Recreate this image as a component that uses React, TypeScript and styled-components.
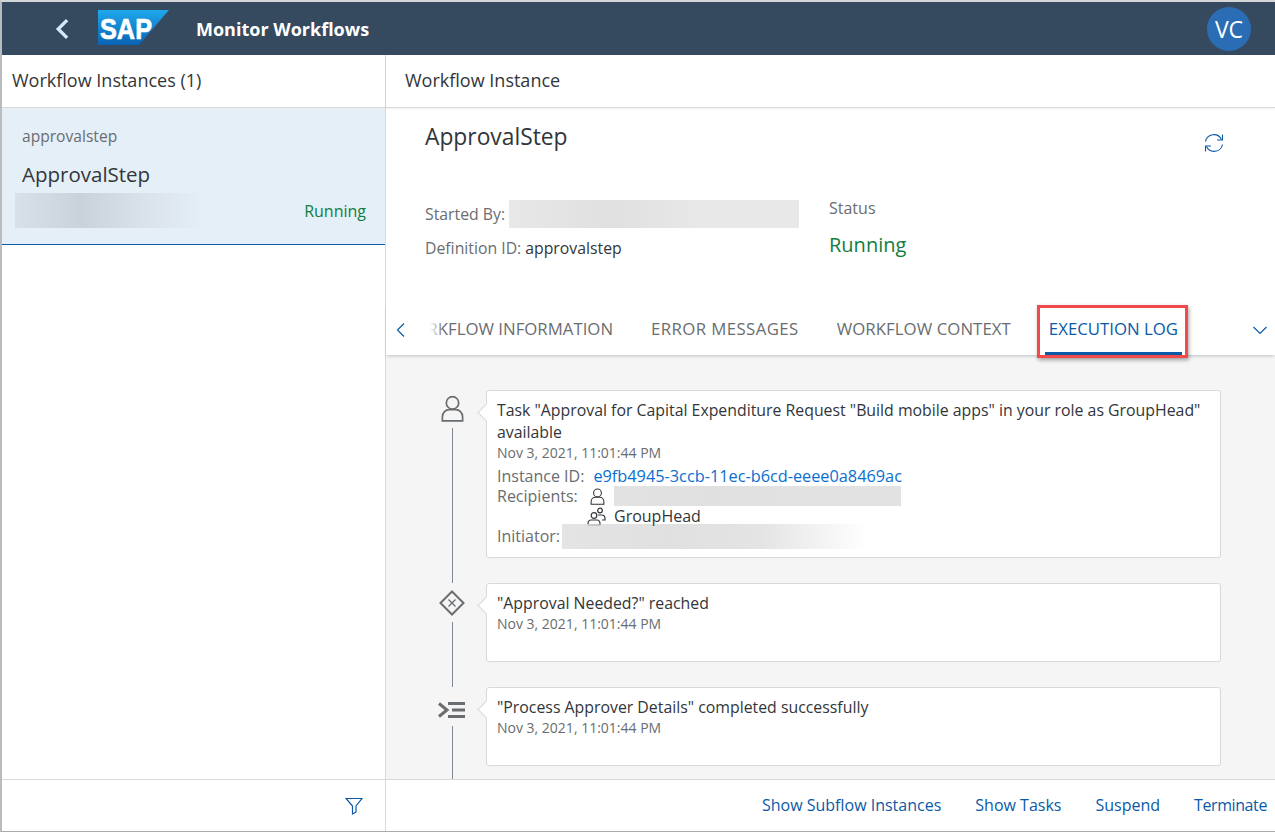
import React from "react";
import styled, { createGlobalStyle } from "styled-components";

const GlobalStyle = createGlobalStyle`
  html, body {
    margin: 0;
    padding: 0;
    background: #ffffff;
  }
  body {
    font-family: "Open Sans", "Liberation Sans", sans-serif;
    color: #32363a;
  }
  * {
    box-sizing: border-box;
  }
`;

const Page = styled.div`
  width: 1275px;
  height: 832px;
  display: flex;
  flex-direction: column;
  overflow: hidden;
  border-top: 2px solid #d4d6d8;
  border-left: 2px solid #b9bcbf;
  border-bottom: 1px solid #a9abad;
`;

const ShellBar = styled.header`
  height: 53px;
  flex: none;
  background: #354a5f;
  display: flex;
  align-items: center;
  padding: 0 24px 0 50px;
`;

const BackButton = styled.span`
  width: 22px;
  display: flex;
  color: #d1e8ff;
`;

const Logo = styled.svg`
  width: 72px;
  height: 36px;
  margin-left: 24px;
  margin-top: -1px;
`;

const ShellTitle = styled.h1`
  margin: 0 0 0 26px;
  font-size: 18px;
  font-weight: 700;
  color: #ffffff;
  flex: 1;
`;

const Avatar = styled.div`
  width: 44px;
  height: 44px;
  border-radius: 50%;
  background: #2a6db5;
  color: #ffffff;
  font-size: 23px;
  display: flex;
  align-items: center;
  justify-content: center;
`;

const Columns = styled.div`
  flex: 1;
  min-height: 0;
  display: flex;
`;

const MasterPane = styled.aside`
  width: 384px;
  flex: none;
  display: flex;
  flex-direction: column;
  border-right: 1px solid #d9d9d9;
`;

const DetailPane = styled.main`
  flex: 1;
  min-width: 0;
  display: flex;
  flex-direction: column;
`;

const PaneHeader = styled.div`
  height: 53px;
  flex: none;
  display: flex;
  align-items: center;
  padding: 0 0 2px ${(p: { $inset: number }) => p.$inset}px;
  font-size: 18px;
  color: #32363a;
  border-bottom: 1px solid #d9d9d9;
  box-shadow: 0 1px 2px rgba(0, 0, 0, 0.06);
`;

const InstanceItem = styled.div`
  height: 137px;
  flex: none;
  background: #e5eff8;
  border-bottom: 1px solid #0a5aa8;
  padding: 18px 19px 0 20px;
`;

const ItemSubject = styled.div`
  font-size: 15.6px;
  color: #6a6d70;
  line-height: 20px;
`;

const ItemTitle = styled.div`
  font-size: 20.5px;
  color: #32363a;
  line-height: 28px;
  margin-top: 14px;
`;

const ItemFooter = styled.div`
  display: flex;
  align-items: flex-end;
  justify-content: space-between;
  margin: 5px 0 0 -7px;
`;

const Redacted = styled.div<{ $w: number; $h: number; $tone: string; $gap?: number; $fade?: boolean }>`
  width: ${(p) => p.$w}px;
  height: ${(p) => p.$h}px;
  margin-left: ${(p) => p.$gap ?? 0}px;
  flex: none;
  background: linear-gradient(
    90deg,
    ${(p) => p.$tone} 0%,
    rgba(0, 0, 0, 0.12) 35%,
    ${(p) => p.$tone} 65%,
    ${(p) => (p.$fade ? "transparent" : p.$tone)} 100%
  );
`;

const ItemStatus = styled.div`
  font-size: 16px;
  color: #107e3e;
  line-height: 22px;
  margin-bottom: 6px;
`;

const Spacer = styled.div`
  flex: 1;
`;

const FilterBar = styled.div`
  height: 52px;
  flex: none;
  display: flex;
  align-items: center;
  justify-content: flex-end;
  padding: 0 22px 0 0;
  border-top: 1px solid #d9d9d9;
  color: #0a5aa8;
`;

const Summary = styled.section`
  height: 197px;
  flex: none;
  padding: 14px 0 0 39px;
  display: flex;
  flex-direction: column;
`;

const SummaryTop = styled.div`
  display: flex;
  justify-content: space-between;
  padding-right: 51px;
`;

const SummaryTitle = styled.h2`
  margin: 0;
  font-size: 22.8px;
  font-weight: 400;
  line-height: 30px;
  color: #32363a;
`;

const RefreshButton = styled.span`
  display: flex;
  margin-top: 11px;
  color: #0a5aa8;
`;

const SummaryFacts = styled.div`
  display: flex;
  margin-top: 44px;
`;

const FactColumn = styled.div`
  width: 404px;
  flex: none;
`;

const FactRow = styled.div`
  display: flex;
  align-items: center;
  height: 34px;
  font-size: 15.8px;
  color: #6a6d70;
`;

const FactValue = styled.span`
  color: #32363a;
  margin-left: 4px;
`;

const StatusLabel = styled.div`
  font-size: 16px;
  color: #6a6d70;
  line-height: 22px;
`;

const StatusValue = styled.div`
  font-size: 20px;
  color: #107e3e;
  line-height: 28px;
  margin-top: 12px;
`;

const TabBar = styled.nav`
  height: 50px;
  flex: none;
  display: flex;
  align-items: center;
  position: relative;
  z-index: 1;
  background: #ffffff;
  box-shadow: 0 2px 3px -1px rgba(0, 0, 0, 0.22);
`;

const TabArrow = styled.span`
  width: 30px;
  flex: none;
  display: flex;
  justify-content: center;
  color: #0a5aa8;
`;

const TabViewport = styled.div`
  width: 771px;
  height: 100%;
  flex: none;
  margin-left: 10px;
  overflow: hidden;
  position: relative;
  display: flex;
  justify-content: flex-end;
  &::before {
    content: "";
    position: absolute;
    left: 0;
    top: 0;
    bottom: 0;
    width: 18px;
    z-index: 1;
    background: linear-gradient(90deg, #ffffff 20%, rgba(255, 255, 255, 0));
  }
`;

const Tab = styled.div<{ $active?: boolean; $tracking?: number }>`
  flex: none;
  height: 100%;
  display: flex;
  align-items: center;
  margin: 0 19px;
  padding: 0 0 4px;
  font-size: 16.8px;
  letter-spacing: ${(p) => p.$tracking ?? 0}px;
  white-space: nowrap;
  color: ${(p) => (p.$active ? "#0a5aa8" : "#6a6d70")};
  position: relative;
  &::after {
    content: "";
    display: ${(p) => (p.$active ? "block" : "none")};
    position: absolute;
    left: -4px;
    right: -4px;
    bottom: 0;
    height: 3px;
    background: #0a5aa8;
  }
`;

const Highlight = styled.div`
  position: absolute;
  left: 651px;
  right: 87px;
  top: 0;
  height: 53px;
  border: 3px solid #f24a4a;
  box-shadow: 1px 2px 4px rgba(0, 0, 0, 0.35);
  pointer-events: none;
`;

const Log = styled.section`
  flex: 1;
  min-height: 0;
  overflow: hidden;
  background: #f5f5f5;
  padding: 35px 54px 0 49px;
  display: flex;
  flex-direction: column;
`;

const LogRow = styled.div`
  display: flex;
  flex: none;
`;

const Gutter = styled.div`
  width: 34px;
  flex: none;
  margin-right: 17px;
  display: flex;
  flex-direction: column;
  align-items: center;
  padding-top: ${(p: { $top: number }) => p.$top}px;
  color: #6a6d70;
`;

const Connector = styled.div`
  flex: 1;
  width: 1px;
  margin-top: 6px;
  background: #7f8a96;
`;

const CardSlot = styled.div`
  flex: 1;
  padding-bottom: 25px;
`;

const Card = styled.article`
  min-height: 79px;
  background: #ffffff;
  border: 1px solid #d9d9d9;
  border-radius: 3px;
  padding: 8px 10px 11px 10px;
  position: relative;
  &::before {
    content: "";
    position: absolute;
    left: -7px;
    top: 15px;
    width: 12px;
    height: 12px;
    background: #ffffff;
    border-left: 1px solid #d9d9d9;
    border-bottom: 1px solid #d9d9d9;
    transform: rotate(45deg);
  }
`;

const CardTitle = styled.div`
  font-size: 15.85px;
  line-height: 22px;
  color: #32363a;
`;

const CardDate = styled.div`
  font-size: 14px;
  line-height: 20px;
  color: #6a6d70;
`;

const MetaRows = styled.div`
  margin-top: 3px;
`;

const MetaRow = styled.div`
  display: flex;
  align-items: center;
  height: 20px;
  font-size: 16px;
  color: #6a6d70;
`;

const MetaLink = styled.span`
  margin-left: 9px;
  font-size: 16.3px;
  color: #0a6ed1;
`;

const RecipientIcon = styled.span<{ $left: number }>`
  display: flex;
  margin-left: ${(p) => p.$left}px;
  margin-right: 8px;
  color: #32363a;
`;

const RecipientName = styled.span`
  color: #32363a;
`;

const ActionBar = styled.footer`
  height: 52px;
  flex: none;
  display: flex;
  align-items: center;
  justify-content: flex-end;
  gap: 34px;
  padding: 0 8px 2px 0;
  background: #ffffff;
  border-top: 1px solid #d9d9d9;
`;

const Action = styled.span<{ $tracking?: number }>`
  font-size: 16px;
  letter-spacing: ${(p) => p.$tracking ?? 0}px;
  color: #0a5aa8;
`;

const Chevron = ({ dir, size, width }: { dir: "left" | "down"; size: number; width: number }) => (
  <svg width={size} height={size} viewBox="0 0 16 16" fill="none" stroke="currentColor" strokeWidth={width}>
    {dir === "left" ? <path d="M11 1.5 4.5 8l6.5 6.5" /> : <path d="M1.5 5 8 11.5 14.5 5" />}
  </svg>
);

const PersonIcon = ({ size, width }: { size: number; width: number }) => (
  <svg width={size} height={size} viewBox="0 0 24 24" fill="none" stroke="currentColor" strokeWidth={width}>
    <circle cx="12" cy="7" r="5.5" />
    <path d="M3 23v-3.5c0-4 3-6.500 6-6.500h6c3 0 6 2.500 6 6.500V23z" />
  </svg>
);

const GroupIcon = () => (
  <svg width="19" height="19" viewBox="0 0 19 19" fill="none" stroke="currentColor" strokeWidth="1.200">
    <circle cx="7" cy="8.500" r="2.800" />
    <path d="M1 18v-1.500c0-2 1.500-3.500 3-3.500h6c1.500 0 3 1.500 3 3.500V18z" />
    <circle cx="13" cy="3.500" r="2.300" />
    <path d="M11 8h3.500c2 0 3.500 1.500 3.500 3.500V13h-3" />
  </svg>
);

const GatewayIcon = () => (
  <svg width="26" height="26" viewBox="0 0 26 26" fill="none" stroke="currentColor">
    <path d="M13 1.500 24.500 13 13 24.500 1.500 13z" strokeWidth="2" />
    <path d="M9.500 9.500l7 7M16.500 9.500l-7 7" strokeWidth="1.300" />
  </svg>
);

const ScriptIcon = () => (
  <svg width="28" height="20" viewBox="0 0 28 20" fill="none" stroke="currentColor" strokeWidth="3">
    <path d="M1 3.500 9 10l-8 6.500" />
    <path d="M10 3.500h17M14 10h13M10 16.500h17" />
  </svg>
);

const RefreshIcon = () => (
  <svg width="20" height="20" viewBox="0 0 20 20" fill="none" stroke="currentColor" strokeWidth="1.100">
    <path d="M1.500 8.500A8.500 8.500 0 0 1 17.500 6.500" />
    <path d="M18.500 1.500v5.500h-5.500" />
    <path d="M18.500 11.500A8.500 8.500 0 0 1 2.500 13.500" />
    <path d="M1.500 18.500V13H7" />
  </svg>
);

const FilterIcon = () => (
  <svg width="18" height="18" viewBox="0 0 18 18" fill="none" stroke="currentColor" strokeWidth="1.200">
    <path d="M1 1.500h16l-6 7.500v6l-3.500 2V9z" />
  </svg>
);

const SapLogo = () => (
  <Logo viewBox="0 0 72 36">
    <defs>
      <linearGradient id="sapFill" x1="0" y1="0" x2="0" y2="1">
        <stop offset="0" stopColor="#1fa8ec" />
        <stop offset="1" stopColor="#0a62b4" />
      </linearGradient>
    </defs>
    <polygon points="0,0 71,0 41,35 0,35" fill="url(#sapFill)" />
    <text
      x="2"
      y="29"
      fontFamily="Liberation Sans"
      fontWeight="700"
      fontSize="30"
      fill="#ffffff"
      stroke="#ffffff"
      strokeWidth="0.7"
      textLength="52"
      lengthAdjust="spacingAndGlyphs"
    >
      SAP
    </text>
  </Logo>
);

export default function App() {
  return (
    <>
      <GlobalStyle />
      <Page>
        <ShellBar>
          <BackButton>
            <Chevron dir="left" size={22} width={2.4} />
          </BackButton>
          <SapLogo />
          <ShellTitle>Monitor Workflows</ShellTitle>
          <Avatar>VC</Avatar>
        </ShellBar>
        <Columns>
          <MasterPane>
            <PaneHeader $inset={10}>Workflow Instances (1)</PaneHeader>
            <InstanceItem>
              <ItemSubject>approvalstep</ItemSubject>
              <ItemTitle>ApprovalStep</ItemTitle>
              <ItemFooter>
                <Redacted $w={190} $h={35} $tone="#d8e1e9" $fade />
                <ItemStatus>Running</ItemStatus>
              </ItemFooter>
            </InstanceItem>
            <Spacer />
            <FilterBar>
              <FilterIcon />
            </FilterBar>
          </MasterPane>
          <DetailPane>
            <PaneHeader $inset={19}>Workflow Instance</PaneHeader>
            <Summary>
              <SummaryTop>
                <SummaryTitle>ApprovalStep</SummaryTitle>
                <RefreshButton>
                  <RefreshIcon />
                </RefreshButton>
              </SummaryTop>
              <SummaryFacts>
                <FactColumn>
                  <FactRow>
                    Started By:
                    <Redacted $w={290} $h={28} $tone="#e8e8e8" $gap={4} />
                  </FactRow>
                  <FactRow>
                    Definition ID:
                    <FactValue>approvalstep</FactValue>
                  </FactRow>
                </FactColumn>
                <div>
                  <StatusLabel>Status</StatusLabel>
                  <StatusValue>Running</StatusValue>
                </div>
              </SummaryFacts>
            </Summary>
            <TabBar>
              <TabArrow>
                <Chevron dir="left" size={16} width={1.2} />
              </TabArrow>
              <TabViewport>
                <Tab>WORKFLOW INFORMATION</Tab>
                <Tab $tracking={0.4}>ERROR MESSAGES</Tab>
                <Tab $tracking={0.06}>WORKFLOW CONTEXT</Tab>
                <Tab $active>EXECUTION LOG</Tab>
              </TabViewport>
              <Spacer />
              <TabArrow>
                <Chevron dir="down" size={16} width={1.2} />
              </TabArrow>
              <Highlight />
            </TabBar>
            <Log>
              <LogRow>
                <Gutter $top={5}>
                  <PersonIcon size={27} width={1.5} />
                  <Connector />
                </Gutter>
                <CardSlot>
                  <Card>
                    <CardTitle>
                      Task "Approval for Capital Expenditure Request "Build mobile apps" in your role as GroupHead" available
                    </CardTitle>
                    <CardDate>Nov 3, 2021, 11:01:44 PM</CardDate>
                    <MetaRows>
                      <MetaRow>
                        Instance ID:
                        <MetaLink>e9fb4945-3ccb-11ec-b6cd-eeee0a8469ac</MetaLink>
                      </MetaRow>
                      <MetaRow>
                        Recipients:
                        <RecipientIcon $left={11}>
                          <PersonIcon size={17} width={1.5} />
                        </RecipientIcon>
                        <Redacted $w={287} $h={20} $tone="#e2e2e2" />
                      </MetaRow>
                      <MetaRow>
                        <RecipientIcon $left={90}>
                          <GroupIcon />
                        </RecipientIcon>
                        <RecipientName>GroupHead</RecipientName>
                      </MetaRow>
                      <MetaRow>
                        Initiator:
                        <Redacted $w={306} $h={25} $tone="#e4e4e4" $gap={2} $fade />
                      </MetaRow>
                    </MetaRows>
                  </Card>
                </CardSlot>
              </LogRow>
              <LogRow>
                <Gutter $top={7}>
                  <GatewayIcon />
                  <Connector />
                </Gutter>
                <CardSlot>
                  <Card>
                    <CardTitle>"Approval Needed?" reached</CardTitle>
                    <CardDate>Nov 3, 2021, 11:01:44 PM</CardDate>
                  </Card>
                </CardSlot>
              </LogRow>
              <LogRow>
                <Gutter $top={13}>
                  <ScriptIcon />
                  <Connector />
                </Gutter>
                <CardSlot>
                  <Card>
                    <CardTitle>"Process Approver Details" completed successfully</CardTitle>
                    <CardDate>Nov 3, 2021, 11:01:44 PM</CardDate>
                  </Card>
                </CardSlot>
              </LogRow>
            </Log>
            <ActionBar>
              <Action>Show Subflow Instances</Action>
              <Action>Show Tasks</Action>
              <Action>Suspend</Action>
              <Action $tracking={-0.4}>Terminate</Action>
            </ActionBar>
          </DetailPane>
        </Columns>
      </Page>
    </>
  );
}
